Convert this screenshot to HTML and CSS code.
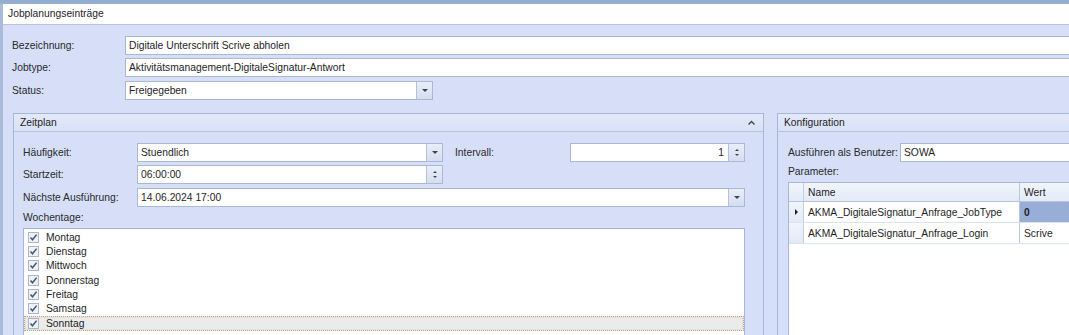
FILE: index.html
```html
<!DOCTYPE html>
<html lang="de">

<head>
    <meta charset="UTF-8">
    <meta name="viewport" content="width=device-width, initial-scale=1.0">
    <title>Jobplanungseinträge</title>
    <link rel="stylesheet" href="styles.css">
</head>

<body>
    <div class="topbar"></div>
    <div class="window">
        <div class="titlebar">Jobplanungseinträge</div>
        <div class="content">
            <div class="fields">
                <div class="row">
                    <span class="lbl">Bezeichnung:</span>
                    <div class="input grow">Digitale Unterschrift Scrive abholen</div>
                </div>
                <div class="row">
                    <span class="lbl">Jobtype:</span>
                    <div class="input grow">Aktivitätsmanagement-DigitaleSignatur-Antwort</div>
                </div>
                <div class="row">
                    <span class="lbl">Status:</span>
                    <div class="input combo status">
                        <span class="val">Freigegeben</span>
                        <span class="btn"><span class="arrow-down"></span></span>
                    </div>
                </div>
            </div>

            <div class="panels">
                <section class="panel zeitplan">
                    <div class="panel-head">
                        <span>Zeitplan</span>
                        <svg class="chevron" width="9" height="6" viewBox="0 0 9 6">
                            <polyline points="1.5,4.5 4.5,1.5 7.5,4.5" fill="none" stroke="#3c4658" stroke-width="1.4" />
                        </svg>
                    </div>
                    <div class="panel-body">
                        <div class="row">
                            <span class="lbl wide">Häufigkeit:</span>
                            <div class="input combo freq">
                                <span class="val">Stuendlich</span>
                                <span class="btn"><span class="arrow-down"></span></span>
                            </div>
                            <span class="lbl interval">Intervall:</span>
                            <div class="input combo grow">
                                <span class="val num">1</span>
                                <span class="btn spin"><span class="arrow-up"></span><span class="arrow-down"></span></span>
                            </div>
                        </div>
                        <div class="row">
                            <span class="lbl wide">Startzeit:</span>
                            <div class="input combo freq">
                                <span class="val">06:00:00</span>
                                <span class="btn spin"><span class="arrow-up"></span><span class="arrow-down"></span></span>
                            </div>
                        </div>
                        <div class="row">
                            <span class="lbl wide">Nächste Ausführung:</span>
                            <div class="input combo grow">
                                <span class="val">14.06.2024 17:00</span>
                                <span class="btn"><span class="arrow-down"></span></span>
                            </div>
                        </div>
                        <div class="caption">Wochentage:</div>
                        <div class="listbox">
                            <div class="item"><span class="check"></span>Montag</div>
                            <div class="item"><span class="check"></span>Dienstag</div>
                            <div class="item"><span class="check"></span>Mittwoch</div>
                            <div class="item"><span class="check"></span>Donnerstag</div>
                            <div class="item"><span class="check"></span>Freitag</div>
                            <div class="item"><span class="check"></span>Samstag</div>
                            <div class="item focused"><span class="check"></span>Sonntag</div>
                        </div>
                    </div>
                </section>

                <section class="panel konfig">
                    <div class="panel-head"><span>Konfiguration</span></div>
                    <div class="panel-body">
                        <div class="row">
                            <span class="lbl user">Ausführen als Benutzer:</span>
                            <div class="input grow">SOWA</div>
                        </div>
                        <div class="caption param">Parameter:</div>
                        <div class="grid">
                            <div class="grid-row head">
                                <div class="cell ind"></div>
                                <div class="cell name">Name</div>
                                <div class="cell wert">Wert</div>
                            </div>
                            <div class="grid-row">
                                <div class="cell ind"><span class="arrow-right"></span></div>
                                <div class="cell name">AKMA_DigitaleSignatur_Anfrage_JobType</div>
                                <div class="cell wert selected">0</div>
                            </div>
                            <div class="grid-row">
                                <div class="cell ind"></div>
                                <div class="cell name">AKMA_DigitaleSignatur_Anfrage_Login</div>
                                <div class="cell wert">Scrive</div>
                            </div>
                        </div>
                    </div>
                </section>
            </div>
        </div>
    </div>
</body>

</html>
```

FILE: styles.css
```css
body {
    margin: 0;
    width: 1069px;
    height: 335px;
    overflow: hidden;
    background-color: #d6dff7;
    font-family: "Liberation Sans", Arial, sans-serif;
    font-size: 10.3px;
    color: #1e1e1e;
}

.topbar {
    height: 4px;
    background-color: #94aed2;
}

.window {
    width: 1100px;
    height: 331px;
    border-left: 3px solid #a9bbd8;
    background-color: #d6dff7;
}

.titlebar {
    height: 20px;
    line-height: 20px;
    padding-left: 5px;
    background-color: #fff;
    border-bottom: 1px solid #b9c4d6;
}

.content {
    padding: 11px 0 0 9px;
}

.fields {
    display: flex;
    flex-direction: column;
}

.row {
    display: flex;
    align-items: center;
    height: 19px;
}

.fields .row:nth-child(2),
.zeitplan .row:nth-child(2) {
    margin-top: 3px;
}

.fields .row:nth-child(3),
.zeitplan .row:nth-child(3) {
    margin-top: 4px;
}

.lbl {
    width: 113px;
    flex-shrink: 0;
    white-space: nowrap;
    color: #2a2a2a;
}

.lbl.wide {
    width: 114px;
}

.lbl.interval {
    width: 115px;
    margin-left: 12px;
}

.lbl.user {
    width: 112px;
}

.input {
    box-sizing: border-box;
    height: 19px;
    line-height: 17px;
    padding-left: 3px;
    background-color: #fff;
    border: 1px solid #a9b9d3;
    white-space: nowrap;
    overflow: hidden;
}

.grow {
    flex: 1;
}

.combo {
    display: flex;
    padding-left: 0;
}

.combo .val {
    flex: 1;
    padding-left: 3px;
}

.combo .val.num {
    text-align: right;
    padding-right: 4px;
}

.status {
    width: 308px;
}

.freq {
    width: 306px;
}

.btn {
    width: 15px;
    display: flex;
    flex-direction: column;
    align-items: center;
    justify-content: center;
    border-left: 1px solid #b3c1d8;
    background: linear-gradient(#e9eef8, #d5ddee);
}

.arrow-down {
    width: 0;
    height: 0;
    border-left: 3px solid transparent;
    border-right: 3px solid transparent;
    border-top: 3px solid #3b4456;
}

.arrow-up {
    width: 0;
    height: 0;
    border-left: 3px solid transparent;
    border-right: 3px solid transparent;
    border-bottom: 3px solid #3b4456;
}

.spin {
    gap: 3px;
}

.spin .arrow-up,
.spin .arrow-down {
    border-left-width: 2px;
    border-right-width: 2px;
    border-top-width: 2px;
    border-bottom-width: 2px;
}

.spin .arrow-up {
    border-top: 0;
}

.spin .arrow-down {
    border-bottom: 0;
}

.panels {
    display: flex;
    gap: 13px;
    margin-top: 13px;
    padding-left: 1px;
}

.panel {
    box-sizing: border-box;
    height: 260px;
    border: 1px solid #a4b7d7;
    background-color: #d6dff7;
}

.zeitplan {
    width: 751px;
}

.konfig {
    flex: 1;
}

.panel-head {
    display: flex;
    align-items: center;
    justify-content: space-between;
    height: 17px;
    padding: 0 6px;
    background: linear-gradient(#e3e9f9, #d9e1f6);
    border-bottom: 1px solid #b5c4de;
}

.chevron {
    margin-right: 1px;
}

.zeitplan .panel-body {
    padding: 11px 18px 0 9px;
}

.konfig .panel-body {
    padding: 11px 0 0 10px;
}

.caption {
    margin-top: 4px;
    line-height: 14px;
    color: #2a2a2a;
}

.listbox {
    margin-top: 3px;
    height: 140px;
    padding-top: 1px;
    background-color: #fff;
    border: 1px solid #a4b7d7;
}

.item {
    box-sizing: border-box;
    display: flex;
    align-items: center;
    height: 14.33px;
    padding-left: 3px;
    border: 1px solid transparent;
}

.item.focused {
    height: 15px;
    background-color: #ebebeb;
    border: 1px dotted #d9a066;
    box-shadow: inset 0 0 0 1px #dde3ec;
}

.check {
    box-sizing: border-box;
    width: 11px;
    height: 11px;
    margin-right: 7px;
    border: 1px solid #a9b6cb;
    background: #eef1f6 url("data:image/svg+xml;utf8,<svg xmlns='http://www.w3.org/2000/svg' width='9' height='9' viewBox='0 0 9 9'><polyline points='1.5,4.5 3.5,6.8 7.6,1.6' fill='none' stroke='%23465672' stroke-width='1.5'/></svg>") no-repeat center;
}

.param {
    margin-top: 3px;
}

.grid {
    margin-top: 3px;
    height: 160px;
    background-color: #fff;
    border: 1px solid #a4b7d7;
    border-right: 0;
}

.grid-row {
    display: flex;
    height: 20px;
    border-bottom: 1px solid #dbe3ef;
}

.grid-row.head {
    height: 18px;
    background: linear-gradient(#f1f5fc, #e3eaf7);
    border-bottom: 1px solid #b6c6de;
}

.cell {
    box-sizing: border-box;
    display: flex;
    align-items: center;
    padding-left: 4px;
    white-space: nowrap;
    overflow: hidden;
}

.cell.ind {
    width: 15px;
    padding-left: 0;
    justify-content: center;
    background: linear-gradient(#f1f5fc, #e3eaf7);
    border-right: 1px solid #c3d0e4;
}

.cell.name {
    width: 216px;
    border-right: 1px solid #b6c6de;
}

.cell.wert {
    flex: 1;
}

.cell.selected {
    background-color: #98aed6;
    font-weight: bold;
}

.arrow-right {
    width: 0;
    height: 0;
    border-top: 3px solid transparent;
    border-bottom: 3px solid transparent;
    border-left: 3px solid #1e1e1e;
}
```
